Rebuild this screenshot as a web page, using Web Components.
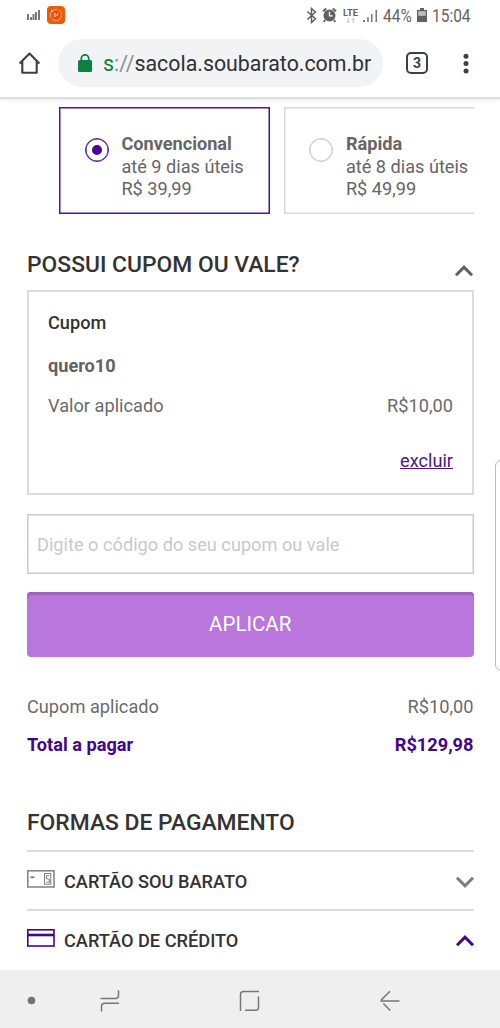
<!DOCTYPE html>
<html lang="pt-BR">
<head>
<meta charset="utf-8">
<title>Sacola</title>
<style>
html,body{margin:0;padding:0;background:#fff}
body{font-family:Roboto,"Liberation Sans",sans-serif;width:500px;height:1028px;overflow:hidden}
</style>
</head>
<body>
<checkout-screen></checkout-screen>
<script>
function define(name, html) {
  const t = document.createElement('template');
  t.innerHTML = html;
  customElements.define(name, class extends HTMLElement {
    constructor() {
      super();
      this.attachShadow({mode: 'open'}).appendChild(t.content.cloneNode(true));
    }
  });
}

define('status-bar', `
<style>
:host{display:flex;height:32px;box-sizing:border-box;padding:0 0 0 26px;color:#646464;align-items:flex-start}
svg{display:block;flex:none}
.app{margin:6px 0 0 7px}
.t{font-size:17.6px;line-height:20px;height:20px;margin-top:6px;width:28px;white-space:nowrap;flex:none}
.t span{display:inline-block;transform:scaleX(.88);transform-origin:0 50%}
.lte{width:16px;margin:8px 0 0 6px;font-size:9.4px;font-weight:700;line-height:9px;flex:none}
.lte svg{margin:1px 0 0 3px}
</style>
<svg style="margin-top:9px" width="14" height="12"><g fill="#777"><path d="M1 5h2v6H1zM4 8h2v3H4zM6.500 5h2v6h-2zM9 3h2v8H9zM12 1h2v10h-2z"/></g></svg>
<svg class="app" width="18" height="18"><rect width="18" height="18" rx="4" fill="#ee5a0c"/><circle cx="9" cy="9" r="5.700" fill="none" stroke="#ffa266" stroke-width="1" stroke-dasharray="13 1.500"/><circle cx="9" cy="9" r="3.600" fill="#e8480a"/><path d="M6.800 7.700h2M6.800 9h4.600M6.800 10.300h2.200M10 7.700h1.300" stroke="#ffd9bd" stroke-width=".9"/><circle cx="5" cy="5" r="1" fill="#ffe3d0"/></svg>
<svg style="margin:7px 0 0 241px" width="12" height="17" fill="none" stroke="#606060" stroke-width="1.500"><path d="M1.300 4.500l8.200 7.300L5.500 15.500V1.500l4 3.500-8.200 7.500"/></svg>
<svg style="margin:7px 0 0 4px" width="15" height="16"><circle cx="7.500" cy="8.500" r="6" fill="#616161"/><path d="M1 4.200L4.200 1.500M14 4.200L10.800 1.500M3 13.200l-1.200 1.600M12 13.200l1.200 1.600" stroke="#616161" stroke-width="2"/><path d="M7.500 4.800v4h3.200" fill="none" stroke="#fff" stroke-width="1.300"/></svg>
<div class="lte">LTE<svg width="10" height="6"><path d="M2.200 0v4M.8 3l1.400 1.800L3.600 3M7.200 5V1M5.800 2L7.200.3 8.600 2" fill="none" stroke="#c4c4c4" stroke-width="1"/></svg></div>
<svg style="margin:9px 0 0 4px" width="15" height="14" fill="#777"><path d="M0 11h2v2H0zM4.200 8h1.500v5H4.200zM8 5h1.500v8H8zM12.500 1H14v12h-1.500z"/></svg>
<div class="t" style="margin-left:5px"><span>44%</span></div>
<svg style="margin:8px 0 0 6px" width="10" height="15"><path d="M3 0h4v2h3v12H0V2h3z" fill="#606060"/><path d="M1.200 3.200h7.600v4.600H1.200z" fill="#bcbcbc"/></svg>
<div class="t" style="margin-left:5px;width:40px"><span>15:04</span></div>
`);

define('browser-toolbar', `
<style>
:host{display:flex;height:65px;box-sizing:border-box;align-items:flex-start;padding:7px 0 0 18px;background:#fff;box-shadow:0 2px 1px #dedede,0 5px 4px -1px #f3f3f3}
svg{display:block;flex:none}
.url{margin-left:16px;width:325px;height:48px;border-radius:24px;background:#f1f3f4;display:flex;align-items:center;box-sizing:border-box;padding-left:20px;font-size:21.35px;color:#303134;white-space:nowrap}
.url span{line-height:48px;padding-top:2px}
.url i{font-style:normal;color:#8b8f92}.url b{font-weight:400;color:#0b8043}
.tabs{margin:13px 0 0 23px;width:22px;height:22px;box-sizing:border-box;border:2px solid #3c4043;border-radius:5px;font-size:14px;line-height:18px;font-weight:700;text-align:center;color:#3c4043;flex:none}
</style>
<svg style="margin-top:12px" width="24" height="24" fill="none" stroke="#3c4043" stroke-width="2.100" stroke-linejoin="round"><path d="M1.600 12.500L11.500 2.600l9.900 9.900M4.300 10v11.800h14.400V10"/></svg>
<div class="url"><svg width="14" height="18" style="margin-right:11px"><rect x="0" y="6" width="14" height="12" rx="1.500" fill="#0b8043"/><path d="M3.300 7V4.500a3.700 3.700 0 017.400 0V7" fill="none" stroke="#0b8043" stroke-width="1.700"/></svg><span><b>s</b><i>://</i>sacola.soubarato.com.br</span></div>
<div class="tabs">3</div>
<svg style="margin:12.500px 0 0 34px" width="8" height="24" fill="#3c4043"><circle cx="4" cy="4.200" r="2.500"/><circle cx="4" cy="11.600" r="2.500"/><circle cx="4" cy="18.900" r="2.500"/></svg>
`);

define('shipping-option', `
<style>
:host{display:flex;flex:none;width:210.500px;height:107px;box-sizing:border-box;border:1px solid #d6d6d6;box-shadow:inset 0 0 0 .5px #ddd;padding:25px 0 0 24.500px;color:#666;font-size:18.150px;line-height:22.600px;white-space:nowrap}
:host([selected]){border-color:#4b1a86;box-shadow:inset 0 0 0 .5px #4b1a86}
.radio{width:24px;height:24px;border-radius:50%;border:1px solid #ccc;box-shadow:inset 0 0 0 .5px #ccc;box-sizing:border-box;margin:4.500px 12.500px 0 0;display:grid;place-items:center;flex:none}
:host([selected]) .radio{border-color:#4b1a86;box-shadow:inset 0 0 0 .5px #4b1a86}
:host([selected]) .radio::after{content:"";width:10px;height:10px;border-radius:50%;background:#4a0597}
::slotted(b){display:block}
</style>
<div class="radio"></div><div><slot></slot></div>
`);

define('chevron-icon', `
<style>:host{display:block;width:20px;height:14px;color:#606060}:host([down]){transform:rotate(180deg);color:#7b7b7b}svg{display:block}</style>
<svg width="20" height="14"><path d="M2 11.200L10 3.200l8 8" fill="none" stroke="currentColor" stroke-width="3"/></svg>
`);

define('amount-row', `
<style>:host{display:flex;justify-content:space-between;font-size:18.200px;line-height:24px;color:#6b6b6b}:host([total]){font-weight:700;color:#43058a}</style>
<slot></slot><slot name="value"></slot>
`);

define('coupon-panel', `
<style>
:host{display:block}
.box{height:205px;box-sizing:border-box;border:2px solid #dcdcdc;padding:19px 18.500px 0 19px;font-size:18.150px;line-height:24px;color:#6b6b6b}
h3{margin:0;font-size:18.150px;font-weight:500;color:#333}
.code{margin:19px 0 16px;font-weight:700;color:#636363}
.del{text-align:right;margin-top:31px}
a{color:#4b1a86;text-decoration:underline}
.input{height:60px;box-sizing:border-box;border:1px solid #ccc;box-shadow:inset 0 0 0 .5px #ccc;margin-top:18.500px;padding:0 9px;font-size:18.200px;line-height:60px;color:#c9c9c9}
.btn{height:65px;box-sizing:border-box;margin-top:18px;border-radius:4px;background:#b976dc;box-shadow:inset 0 4px 2px -1px #9b62ba;color:#fff;font-size:20.500px;line-height:64px;text-align:center}
</style>
<div class="box">
<h3>Cupom</h3><div class="code">quero10</div>
<amount-row>Valor aplicado<span slot="value">R$10,00</span></amount-row>
<div class="del"><a>excluir</a></div>
</div>
<div class="input">Digite o código do seu cupom ou vale</div>
<div class="btn">APLICAR</div>
`);

define('payment-method', `
<style>
:host{display:flex;align-items:center;height:59px;box-sizing:border-box;border-top:2px solid #dcdcdc;font-size:18.200px;font-weight:500;color:#333}
::slotted(svg){display:block;margin:-3px 9px 0 0}
.l{flex:1;padding-top:2px}
slot[name=toggle]{display:block}
::slotted(chevron-icon){margin-top:3px;margin-right:-1px}
</style>
<slot name="icon"></slot><div class="l"><slot></slot></div><slot name="toggle"></slot>
`);

define('nav-bar', `
<style>:host{display:flex;align-items:center;height:58.500px;background:#efefef;box-sizing:border-box;padding:4px 0 0 27px}svg{display:block;flex:none}</style>
<svg width="9" height="9"><circle cx="4.500" cy="4.500" r="3.800" fill="#747474"/></svg>
<svg style="margin-left:64px" width="20" height="24" fill="none" stroke="#777" stroke-width="1.500"><path d="M.5 9.500H15.500q3 0 3-3V1.200M19 14.300H4.500q-3 0-3 3V22.500"/></svg>
<svg style="margin-left:119px" width="21" height="22" fill="none" stroke="#777" stroke-width="1.500"><path d="M1.500 21V4.500q0-3 3-3H20M6 20.200h10.500q3 0 3-3V6.500"/></svg>
<svg style="margin-left:120px" width="20" height="22" fill="none" stroke="#777" stroke-width="1.500"><path d="M10 1.200L1.300 9.900v1.200H19.500M3.400 13.500l6.800 7"/></svg>
`);

define('checkout-screen', `
<style>
:host{display:flex;flex-direction:column;width:500px;height:1028px;overflow:hidden;position:relative;background:#fff}
main{height:872.500px;box-sizing:border-box;padding:10px 26.500px 0 27px;flex:none;overflow:hidden}
browser-toolbar{z-index:1;flex:none}
status-bar,nav-bar{flex:none}
.ship{display:flex;gap:14px;margin-left:32.400px;overflow:hidden}
h2{margin:0;font-size:22.850px;line-height:30px;font-weight:500;color:#333;white-space:nowrap}
.head{display:flex;justify-content:space-between;margin-top:36px;height:40px}
.head chevron-icon{margin:14px -.5px 0 0}
amount-row.a{margin-top:38px}amount-row.b{margin-top:14px}
h2.pay{margin:51px 0 12px}
.handle{position:absolute;left:495px;top:460px;width:20px;height:211px;box-sizing:border-box;border:1px solid #bbb;border-radius:6px;background:#fff}
</style>
<status-bar></status-bar>
<browser-toolbar></browser-toolbar>
<main>
<div class="ship">
<shipping-option selected><b>Convencional</b>até 9 dias úteis<br>R$ 39,99</shipping-option>
<shipping-option><b>Rápida</b>até 8 dias úteis<br>R$ 49,99</shipping-option>
</div>
<div class="head"><h2>POSSUI CUPOM OU VALE?</h2><chevron-icon></chevron-icon></div>
<coupon-panel></coupon-panel>
<amount-row class="a">Cupom aplicado<span slot="value">R$10,00</span></amount-row>
<amount-row class="b" total>Total a pagar<span slot="value">R$129,98</span></amount-row>
<h2 class="pay">FORMAS DE PAGAMENTO</h2>
<payment-method><svg slot="icon" width="28" height="18"><rect x=".8" y=".8" width="26.200" height="16.200" fill="none" stroke="#808080" stroke-width="1.500"/><path d="M3.500 7.300h3.800" stroke="#777" stroke-width="1.800"/><path d="M17.500 3.500h6.200v10.800h-6.200zM22.300 5.700h-3v2.800l3 .8v2.900h-3" fill="none" stroke="#858585" stroke-width="1.100"/></svg>CARTÃO SOU BARATO<chevron-icon slot="toggle" down></chevron-icon></payment-method>
<payment-method><svg slot="icon" width="28" height="18"><rect x=".8" y=".8" width="26.200" height="16.200" fill="none" stroke="#43058a" stroke-width="1.600"/><path d="M1 6h26" stroke="#43058a" stroke-width="2.600"/></svg>CARTÃO DE CRÉDITO<chevron-icon slot="toggle" style="color:#43058a"></chevron-icon></payment-method>
</main>
<nav-bar></nav-bar>
<div class="handle"></div>
`);
</script>
</body>
</html>
